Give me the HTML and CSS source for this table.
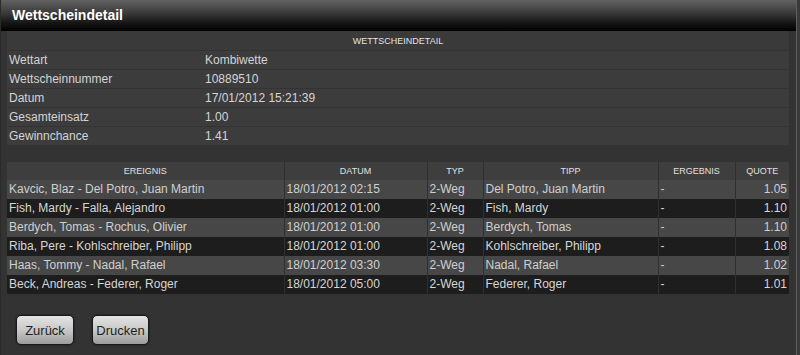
FILE: index.html
```html
<!DOCTYPE html>
<html lang="de">
<head>
<meta charset="utf-8">
<title>Wettscheindetail</title>
<link rel="stylesheet" href="styles.css">
</head>
<body>
<div class="window">
  <div class="titlebar"><h1 class="title">Wettscheindetail</h1></div>
  <div class="content">
    <table class="detail">
      <colgroup>
        <col class="c-label"><col class="c-value">
      </colgroup>
      <thead>
        <tr><th colspan="2" class="caption">WETTSCHEINDETAIL</th></tr>
      </thead>
      <tbody>
        <tr><td>Wettart</td><td>Kombiwette</td></tr>
        <tr><td>Wettscheinnummer</td><td>10889510</td></tr>
        <tr><td>Datum</td><td>17/01/2012 15:21:39</td></tr>
        <tr><td>Gesamteinsatz</td><td>1.00</td></tr>
        <tr><td>Gewinnchance</td><td>1.41</td></tr>
      </tbody>
    </table>

    <table class="events">
      <colgroup>
        <col class="c-ev"><col class="c-date"><col class="c-typ"><col class="c-tipp"><col class="c-erg"><col class="c-quote">
      </colgroup>
      <thead>
        <tr><th>EREIGNIS</th><th>DATUM</th><th>TYP</th><th>TIPP</th><th>ERGEBNIS</th><th>QUOTE</th></tr>
      </thead>
      <tbody>
        <tr class="light"><td>Kavcic, Blaz - Del Potro, Juan Martin</td><td>18/01/2012 02:15</td><td>2-Weg</td><td>Del Potro, Juan Martin</td><td>-</td><td class="num">1.05</td></tr>
        <tr class="dark"><td>Fish, Mardy - Falla, Alejandro</td><td>18/01/2012 01:00</td><td>2-Weg</td><td>Fish, Mardy</td><td>-</td><td class="num">1.10</td></tr>
        <tr class="light"><td>Berdych, Tomas - Rochus, Olivier</td><td>18/01/2012 01:00</td><td>2-Weg</td><td>Berdych, Tomas</td><td>-</td><td class="num">1.10</td></tr>
        <tr class="dark"><td>Riba, Pere - Kohlschreiber, Philipp</td><td>18/01/2012 01:00</td><td>2-Weg</td><td>Kohlschreiber, Philipp</td><td>-</td><td class="num">1.08</td></tr>
        <tr class="light"><td>Haas, Tommy - Nadal, Rafael</td><td>18/01/2012 03:30</td><td>2-Weg</td><td>Nadal, Rafael</td><td>-</td><td class="num">1.02</td></tr>
        <tr class="dark"><td>Beck, Andreas - Federer, Roger</td><td>18/01/2012 05:00</td><td>2-Weg</td><td>Federer, Roger</td><td>-</td><td class="num">1.01</td></tr>
      </tbody>
    </table>

    <div class="buttons">
      <button class="btn btn-back">Zurück</button>
      <button class="btn btn-print">Drucken</button>
    </div>
  </div>
</div>
</body>
</html>
```

FILE: styles.css
```css
html, body {
  margin: 0;
  padding: 0;
  background: #3a3a3a;
}
body {
  font-family: "Liberation Sans", Arial, sans-serif;
  width: 800px;
  height: 355px;
  overflow: hidden;
}
.window {
  width: 795px;
  height: 355px;
  background: #333333;
  border-left: 1px solid #2a2a2a;
  border-right: 1px solid #5e5e5e;
  box-sizing: content-box;
  display: flex;
  flex-direction: column;
}
.titlebar {
  height: 31px;
  flex: none;
  background: linear-gradient(to bottom, #626262 0%, #3c3c3c 40%, #151515 75%, #000000 100%);
  display: flex;
  align-items: center;
  padding-left: 11px;
}
.title {
  margin: 0;
  font-size: 14px;
  font-weight: bold;
  color: #ffffff;
  line-height: 16px;
  padding-bottom: 1px;
}
.content {
  padding: 0 0 0 6px;
}
table {
  border-collapse: collapse;
  width: 782px;
  table-layout: fixed;
  font-size: 12px;
}
.detail {
  background: #3c3c3c;
}
.c-label { width: 196px; }
.c-value { width: 586px; }
.detail th.caption {
  height: 19px;
  padding: 0;
  font-size: 9px;
  font-weight: normal;
  color: #e2e2e2;
  text-align: center;
  background: #3a3a3a;
  border-bottom: 1px solid #333;
}
.detail td {
  height: 18px;
  padding: 0 2px;
  color: #d4d4d4;
  border-bottom: 1px solid #333;
  line-height: 18px;
}
.events {
  margin-top: 16px;
}
.c-ev { width: 277px; }
.c-date { width: 143px; }
.c-typ { width: 56px; }
.c-tipp { width: 175px; }
.c-erg { width: 77px; }
.c-quote { width: 54px; }
.events th {
  height: 18px;
  padding: 0;
  font-size: 9px;
  font-weight: normal;
  color: #e0e0e0;
  background: #3e3e3e;
  text-align: center;
  border-left: 1px solid #2f2f2f;
}
.events td {
  height: 19px;
  padding: 0 2px;
  line-height: 19px;
  white-space: nowrap;
  overflow: hidden;
  border-left: 1px solid #2f2f2f;
}
.events th:first-child, .events td:first-child {
  border-left: none;
}
.events tr.light td {
  background: #474747;
  color: #cfcfcf;
}
.events tr.dark td {
  background: #1d1d1d;
  color: #d6d6d6;
}
.events td.num {
  text-align: right;
}
.buttons {
  display: flex;
  gap: 18px;
  padding: 21px 0 0 9px;
}
.btn {
  height: 30px;
  padding: 0;
  font-family: "Liberation Sans", Arial, sans-serif;
  font-size: 13px;
  color: #1e1e1e;
  background: linear-gradient(to bottom, #e4e4e4 0%, #c8c8c8 50%, #9c9c9c 100%);
  border: 1px solid #1a1a1a;
  border-radius: 5px;
  box-shadow: 0 0 2px #111;
}
.btn-back { width: 58px; }
.btn-print { width: 57px; }
```
